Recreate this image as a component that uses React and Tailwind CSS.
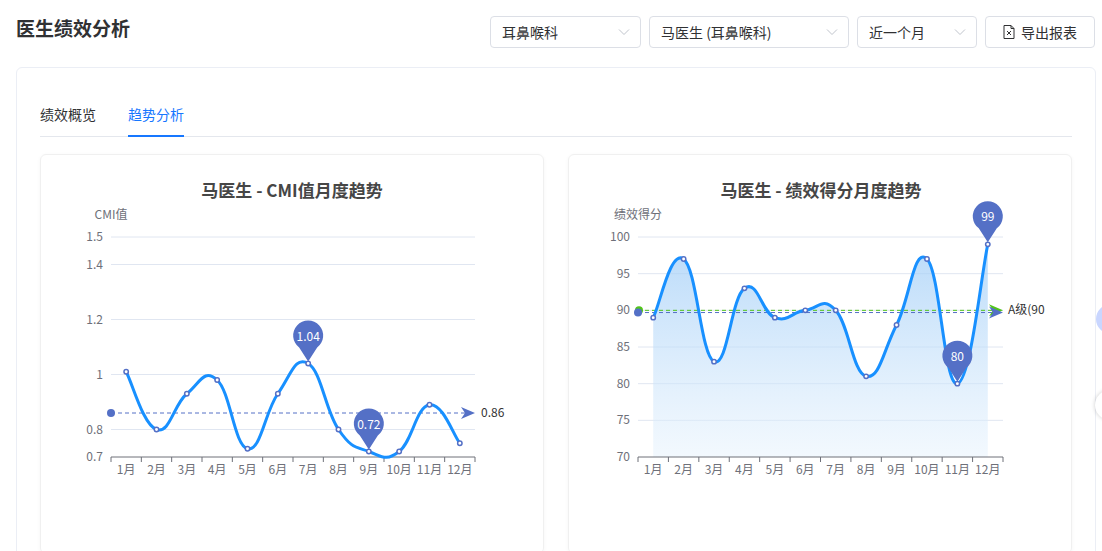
import React from "react";

const F = '"Noto Sans CJK SC","Noto Sans",sans-serif';

function smooth(pts) {
  let d = `M${pts[0][0]},${pts[0][1]}`;
  for (let i = 0; i < pts.length - 1; i++) {
    const p0 = pts[i - 1] || pts[i], p1 = pts[i], p2 = pts[i + 1], p3 = pts[i + 2] || p2;
    const t = 0.22;
    const c1 = [p1[0] + (p2[0] - p0[0]) * t, p1[1] + (p2[1] - p0[1]) * t];
    const c2 = [p2[0] - (p3[0] - p1[0]) * t, p2[1] - (p3[1] - p1[1]) * t];
    d += ` C${c1[0]},${c1[1]} ${c2[0]},${c2[1]} ${p2[0]},${p2[1]}`;
  }
  return d;
}

const Pin = ({ x, y, label }) => (
  <g>
    <path d={`M${x},${y} L${x - 9},${y - 14} A15,15 0 1 1 ${x + 9},${y - 14} Z`} fill="#5470c6" />
    <text x={x} y={y - 21} textAnchor="middle" fontSize="12" fill="#fff" fontFamily={F}>{label}</text>
  </g>
);

function Chart({ vb, x0, x1, yOf, vals, ticks, grid, title, titleX, yname, area, avg, extra, pins }) {
  const bw = (x1 - x0) / 12;
  const pts = vals.map((v, i) => [x0 + bw * (i + 0.5), yOf(v)]);
  const d = smooth(pts);
  const yb = yOf(ticks[0]);
  return (
    <svg viewBox={vb.join(" ")} width={vb[2]} height={vb[3]} className="block">
      <defs>
        <linearGradient id="ga" x1="0" y1="0" x2="0" y2="1">
          <stop offset="0" stopColor="#9ccbf7" stopOpacity="0.7" />
          <stop offset="1" stopColor="#e6f2fd" stopOpacity="0.5" />
        </linearGradient>
      </defs>
      <text x={titleX} y={197} textAnchor="middle" fontSize="17" fontWeight="700" fill="#464646" fontFamily={F}>{title}</text>
      <text x={yname[0]} y={219} textAnchor="middle" fontSize="12" fill="#6e7079" fontFamily={F}>{yname[1]}</text>
      {grid.map((g) => (
        <line key={g} x1={x0} x2={x1} y1={yOf(g)} y2={yOf(g)} stroke="#e0e6f1" />
      ))}
      {ticks.map((t) => (
        <text key={t} x={x0 - 8} y={yOf(t) + 4} textAnchor="end" fontSize="12" fill="#6e7079" fontFamily={F}>{t}</text>
      ))}
      {area && <path d={`${d} L${pts[11][0]},${yb} L${pts[0][0]},${yb} Z`} fill="url(#ga)" />}
      <line x1={x0} x2={x1} y1={yb} y2={yb} stroke="#6e7079" />
      {Array.from({ length: 13 }).map((_, i) => (
        <line key={i} x1={x0 + bw * i} x2={x0 + bw * i} y1={yb} y2={yb + 5} stroke="#6e7079" />
      ))}
      {vals.map((_, i) => (
        <text key={i} x={x0 + bw * (i + 0.5)} y={yb + 17} textAnchor="middle" fontSize="12" fill="#6e7079" fontFamily={F}>{i + 1}月</text>
      ))}
      {extra}
      <line x1={x0} x2={x1 - 8} y1={avg} y2={avg} stroke="#5470c6" strokeDasharray="4 3" />
      <circle cx={x0} cy={avg} r="4" fill="#5470c6" />
      <path d={`M${x1 - 14},${avg - 6} L${x1},${avg} L${x1 - 14},${avg + 6} L${x1 - 10},${avg} Z`} fill="#5470c6" />
      <path d={d} fill="none" stroke="#1890ff" strokeWidth="3" />
      {pts.map((p, i) => (
        <circle key={i} cx={p[0]} cy={p[1]} r="2.2" fill="#fff" stroke="#5470c6" strokeWidth="1.5" />
      ))}
      {pins.map((i) => (
        <Pin key={i} x={pts[i][0]} y={pts[i][1] - 2} label={vals[i]} />
      ))}
    </svg>
  );
}

const Select = ({ w, label }) => (
  <div className={`${w} h-[32px] border border-[#dcdfe6] rounded-[4px] flex items-center justify-between pl-[11px] pr-[10px] text-[14px] text-[#303133] bg-white`}>
    <span>{label}</span>
    <svg width="12" height="8" viewBox="0 0 12 8"><path d="M1 1.5 L6 6.5 L11 1.5" fill="none" stroke="#c0c4cc" strokeWidth="1" /></svg>
  </div>
);

export default function App() {
  const yL = (v) => 457 - (v - 0.7) * 275;
  const yR = (v) => 457 - (v - 70) * (220 / 30);
  return (
    <div className="w-[1102px] h-[551px] overflow-hidden bg-white relative" style={{ fontFamily: F }}>
      <div className="flex items-center justify-between pl-[16px] pr-[7px] pt-[16px] h-[48px]">
        <div className="text-[19px] font-bold text-[#303133] self-start mt-[-2px]">医生绩效分析</div>
        <div className="flex gap-[8px]">
          <Select w="w-[151px]" label="耳鼻喉科" />
          <Select w="w-[200px]" label="马医生 (耳鼻喉科)" />
          <Select w="w-[120px]" label="近一个月" />
          <div className="w-[110px] h-[32px] border border-[#dcdfe6] rounded-[4px] flex items-center justify-center gap-[6px] text-[14px] text-[#303133]">
            <svg width="12" height="14" viewBox="0 0 12 14"><path d="M1 .5h7l3 3v10H1z M8 .5v3h3" fill="none" stroke="#303133" /><path d="M4 6l4 4M8 6l-4 4" stroke="#303133" /></svg>
            导出报表
          </div>
        </div>
      </div>
      <div className="ml-[16px] mt-[19px] w-[1080px] h-[500px] border border-[#ebeef5] rounded-[6px] px-[23px]">
        <div className="flex gap-[32px] pt-[35px] border-b border-[#e4e7ed] text-[14px] h-[69px]">
          <div className="text-[#303133] leading-[22px]">绩效概览</div>
          <div className="text-[#1677ff] leading-[22px] border-b-2 border-[#1677ff] h-[34px]">趋势分析</div>
        </div>
        <div className="flex gap-[24px] mt-[17px]">
          <div className="w-[505px] h-[400px] border border-[#f0f0f0] rounded-[6px] shadow-[0_1px_4px_rgba(0,0,0,0.04)] overflow-hidden">
            <Chart vb={[40, 155, 505, 400]} x0={110} x1={474} yOf={yL}
              vals={[1.01, 0.8, 0.93, 0.98, 0.73, 0.93, 1.04, 0.8, 0.72, 0.72, 0.89, 0.75]}
              ticks={[0.7, 0.8, 1, 1.2, 1.4, 1.5]} grid={[0.8, 1, 1.2, 1.4, 1.5]}
              title="马医生 - CMI值月度趋势" titleX={291} yname={[110, "CMI值"]}
              avg={yL(0.86)} pins={[6, 8]}
              extra={<text x={480} y={yL(0.86) + 4} fontSize="12" fill="#333" fontFamily={F}>0.86</text>} />
          </div>
          <div className="w-[504px] h-[400px] border border-[#f0f0f0] rounded-[6px] shadow-[0_1px_4px_rgba(0,0,0,0.04)] overflow-visible">
            <Chart vb={[568, 155, 504, 400]} x0={637} x1={1002} yOf={yR}
              vals={[89, 97, 83, 93, 89, 90, 90, 81, 88, 97, 80, 99]}
              ticks={[70, 75, 80, 85, 90, 95, 100]} grid={[75, 80, 85, 90, 95, 100]} area
              title="马医生 - 绩效得分月度趋势" titleX={820} yname={[637, "绩效得分"]}
              avg={yR(89.7)} pins={[10, 11]}
              extra={<g>
                <line x1={637} x2={994} y1={yR(90)} y2={yR(90)} stroke="#52c41a" strokeDasharray="4 3" />
                <circle cx={638} cy={yR(90)} r="4" fill="#52c41a" />
                <path d={`M988,${yR(90) - 6} L1002,${yR(90)} L988,${yR(90) + 6} L992,${yR(90)} Z`} fill="#52c41a" />
                <text x={1007} y={yR(90) + 4} fontSize="12" fill="#333" fontFamily={F}>A级(90</text>
              </g>} />
          </div>
        </div>
      </div>
      <div className="absolute left-[1096px] top-[304px] w-[30px] h-[30px] rounded-full bg-[#c9d6ff]" />
      <div className="absolute left-[1095px] top-[390px] w-[30px] h-[30px] rounded-full bg-white shadow-[0_0_4px_rgba(0,0,0,0.2)]" />
    </div>
  );
}
